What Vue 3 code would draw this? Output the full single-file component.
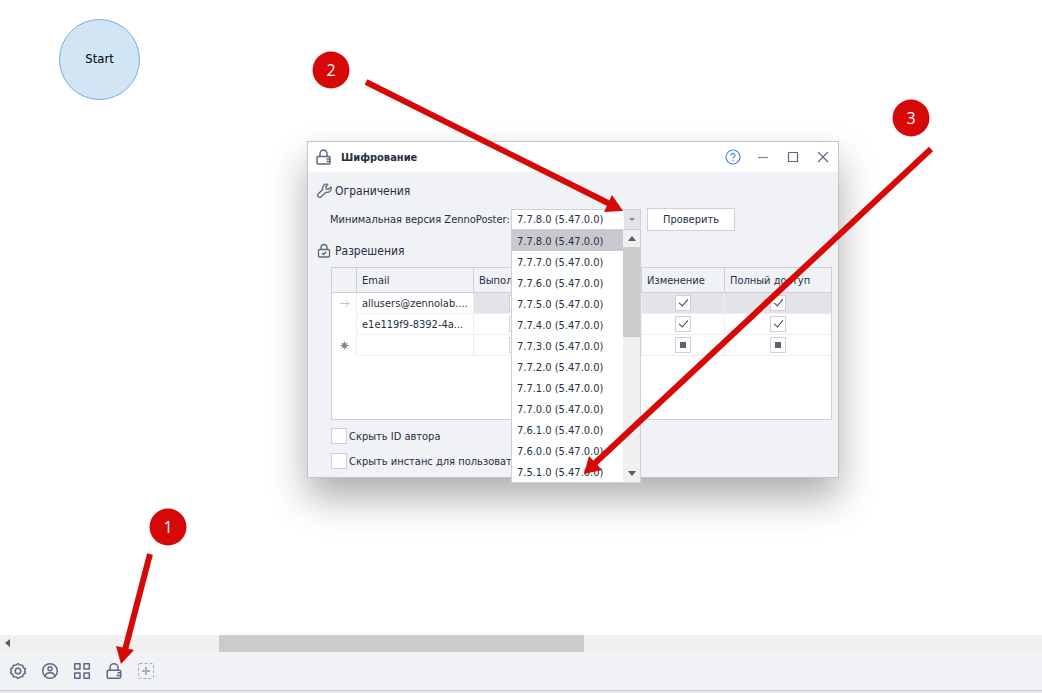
<!-- src/App.vue -->
<script setup>
import { ref } from 'vue'

const versions = [
  '7.7.8.0', '7.7.7.0', '7.7.6.0', '7.7.5.0', '7.7.4.0', '7.7.3.0',
  '7.7.2.0', '7.7.1.0', '7.7.0.0', '7.6.1.0', '7.6.0.0', '7.5.1.0'
].map(v => `${v} (5.47.0.0)`)

const version = ref(versions[0])
const hideAuthor = ref(false)
const hideInstance = ref(false)

const rights = ['run', 'view', 'edit', 'full']

const rows = ref([
  { id: 1, mark: 'current', email: 'allusers@zennolab....', run: true, view: true, edit: true, full: true },
  { id: 2, mark: '', email: 'e1e119f9-8392-4a...', run: true, view: true, edit: true, full: true },
  { id: 3, mark: 'new', email: '', run: null, view: null, edit: null, full: null }
])

// numbered hints with arrows, drawn over the whole workspace
const hints = [
  { n: 1, x: 168, y: 527, line: [150, 554, 125, 650], head: '121,664 116,646 134,650' },
  { n: 2, x: 331, y: 70, line: [366, 82, 610, 204], head: '623,211 612,195 604,212' },
  { n: 3, x: 911, y: 118, line: [931, 149, 594, 464], head: '584,474 589,456 602,470' }
]
</script>

<template>
  <div class="page">
    <main class="canvas">
      <div class="start">Start</div>

      <section class="dialog" aria-label="Шифрование">
        <header class="dialog__head">
          <svg class="dialog__icon" width="16" height="18" viewBox="0 0 16 18">
            <path d="M4 8V5.500a3.500 3.500 0 0 1 7 0V8M2 8.500h11a1 1 0 0 1 1 1v5.500a1 1 0 0 1-1 1H2a1 1 0 0 1-1-1V9.500a1 1 0 0 1 1-1zM14 11h-3.500M14 13.500h-3.500" />
          </svg>
          <h1 class="dialog__title">Шифрование</h1>
          <button class="win help" aria-label="Справка">
            <svg width="16" height="16" viewBox="0 0 16 16">
              <circle cx="8" cy="8" r="7" />
              <path d="M6 6.500a2 2 0 1 1 3 1.600c-.7.400-1 .8-1 1.600M8 11v1.200" />
            </svg>
          </button>
          <button class="win min" aria-label="Свернуть">
            <svg width="12" height="12" viewBox="0 0 12 12"><path d="M1 6.500h10" /></svg>
          </button>
          <button class="win" aria-label="Развернуть">
            <svg width="12" height="12" viewBox="0 0 12 12"><path d="M1.500 1.500h9v9h-9z" /></svg>
          </button>
          <button class="win" aria-label="Закрыть">
            <svg width="12" height="12" viewBox="0 0 12 12"><path d="M1 1l10 10M11 1L1 11" /></svg>
          </button>
        </header>

        <div class="dialog__body">
          <h2 class="group">
            <svg width="16" height="16" viewBox="0 0 16 16">
              <path d="M10.800 1.300a4 4 0 0 0-5 5.200L1.300 10.800a1.900 1.900 0 0 0 .3 3.100 1.900 1.900 0 0 0 2.600-.2l4.800-4.500a4 4 0 0 0 5-5.300L11.300 6.300 9.300 6 8.700 4z" />
            </svg>
            Ограничения
          </h2>

          <div class="field">
            <label for="version">Минимальная версия ZennoPoster:</label>
            <div class="combo">
              <select id="version" v-model="version" class="combo__select">
                <option v-for="v in versions" :key="v">{{ v }}</option>
              </select>
              <span class="combo__arrow"></span>
              <div class="combo__drop">
                <ul class="combo__list" role="listbox">
                  <li v-for="v in versions" :key="v" role="option" :aria-selected="v===version"
                      :class="['item', { active: v===version }]" @click="version=v">
                    {{ v }}
                  </li>
                </ul>
                <div class="vbar">
                  <span class="vbar__up"></span>
                  <span class="vbar__thumb"></span>
                  <span class="vbar__down"></span>
                </div>
              </div>
            </div>
            <button class="check-btn">Проверить</button>
          </div>

          <h2 class="group group--rights">
            <svg width="16" height="16" viewBox="0 0 16 16">
              <path d="M4 6.500V4.500a3 3 0 0 1 6 0v2M2.500 6.500h9a1 1 0 0 1 1 1v5.500a1 1 0 0 1-1 1h-9a1 1 0 0 1-1-1v-5.500a1 1 0 0 1 1-1zM5 10l1.500 1.500L9.300 8.800" />
            </svg>
            Разрешения
          </h2>

          <div class="grid">
            <table>
              <colgroup>
                <col class="c-mark" /><col class="c-email" /><col class="c-run" />
                <col class="c-view" /><col class="c-edit" /><col />
              </colgroup>
              <thead>
                <tr>
                  <th></th><th>Email</th><th>Выполнение</th><th></th><th>Изменение</th><th>Полный доступ</th>
                </tr>
              </thead>
              <tbody>
                <tr v-for="r in rows" :key="r.id" :class="{ current: r.mark==='current' }">
                  <td class="mark">
                    <svg v-if="r.mark==='current'" width="11" height="11" viewBox="0 0 11 11">
                      <path d="M1 5.500h9M6.500 2l3.500 3.500L6.500 9" />
                    </svg>
                    <svg v-else-if="r.mark==='new'" class="new" width="11" height="11" viewBox="0 0 11 11">
                      <circle cx="5.500" cy="5.500" r="2" />
                      <path d="M5.500 1.500v8M1.500 5.500h8M2.700 2.700l5.600 5.600M8.300 2.700L2.700 8.300" />
                    </svg>
                  </td>
                  <td class="email">{{ r.email }}</td>
                  <td v-for="k in rights" :key="k" class="flag">
                    <input v-model="r[k]" type="checkbox" :class="['box', { mixed: r[k]===null }]"
                           :aria-label="k" />
                  </td>
                </tr>
              </tbody>
            </table>
          </div>

          <label class="opt"><input v-model="hideAuthor" type="checkbox" class="box" />Скрыть ID автора</label>
          <label class="opt"><input v-model="hideInstance" type="checkbox" class="box" />Скрыть инстанс для пользователей</label>
        </div>
      </section>
    </main>

    <div class="hbar">
      <span class="hbar__left"></span>
      <span class="hbar__thumb"></span>
    </div>

    <nav class="tools">
      <button class="tool" aria-label="Настройки">
        <svg width="18" height="18" viewBox="0 0 18 18">
          <path d="M9 1.500l2 1.500 2.500.3.900 2.400 2 1.300-.7 2 .7 2-2 1.300-.9 2.400-2.500.3L9 16.500 7 15l-2.500-.3-.9-2.400-2-1.300.7-2-.7-2 2-1.300.9-2.400L7 3z" />
          <circle cx="9" cy="9" r="2.800" />
        </svg>
      </button>
      <button class="tool" aria-label="Профиль">
        <svg width="18" height="18" viewBox="0 0 18 18">
          <circle cx="9" cy="9" r="7.300" />
          <circle cx="9" cy="6.800" r="2" />
          <path d="M4 14.200c.6-2.600 2.300-3.400 5-3.400s4.400.8 5 3.400" />
        </svg>
      </button>
      <button class="tool" aria-label="Блоки">
        <svg width="18" height="18" viewBox="0 0 18 18">
          <path d="M1.700 1.700h5.300v5.300h-5.300zM11 1.700h5.300v5.300h-5.300zM1.700 11h5.300v5.300h-5.300zM11 11h5.300v5.300h-5.300z" />
        </svg>
      </button>
      <button class="tool" aria-label="Шифрование">
        <svg width="18" height="18" viewBox="0 0 18 18">
          <path d="M5 8V5.700a4 4 0 0 1 8 0V8M3.700 8.200h10.500a1.500 1.500 0 0 1 1.500 1.500v5a1.500 1.500 0 0 1-1.500 1.500H3.700a1.500 1.500 0 0 1-1.500-1.500v-5a1.500 1.500 0 0 1 1.500-1.500zM15.500 10.800h-3M15.500 13.500h-4" />
        </svg>
      </button>
      <button class="tool tool--add" aria-label="Добавить">
        <svg width="18" height="18" viewBox="0 0 18 18">
          <rect x="1.500" y="1.500" width="15" height="15" rx="1" stroke-dasharray="3 2" />
          <path class="plus" d="M9 5v8M5 9h8" />
        </svg>
      </button>
    </nav>
    <footer class="status"></footer>

    <svg class="hints">
      <g v-for="h in hints" :key="h.n">
        <line :x1="h.line[0]" :y1="h.line[1]" :x2="h.line[2]" :y2="h.line[3]" />
        <polygon :points="h.head" />
        <circle :cx="h.x" :cy="h.y" r="18.500" />
        <text :x="h.x" :y="h.y + 6">{{ h.n }}</text>
      </g>
    </svg>
  </div>
</template>

<style>
body { margin:0; background:#fff; }
</style>

<style scoped>
* { box-sizing:border-box; }
.page {
  position:relative; display:flex; flex-direction:column; min-height:100vh; overflow:hidden;
  font-family:"DejaVu Sans Condensed", "DejaVu Sans", sans-serif; font-size:11px; color:#26303e;
}
.page svg { fill:none; stroke:#5d6881; stroke-width:1.5; stroke-linejoin:round; flex:none; }
button { font:inherit; color:inherit; cursor:pointer; }

.canvas { position:relative; flex:1; }
.start {
  position:absolute; left:59px; top:19px; width:81px; height:81px; border-radius:50%;
  display:flex; align-items:center; justify-content:center; padding-bottom:2px;
  background:#d2e5f4; border:1px solid #78abe0; color:#000; font-size:13px;
}

/* dialog window */
.dialog {
  position:absolute; left:307px; top:141px; width:532px;
  background:#f1f2f6; border:1px solid #c3c5ca;
  box-shadow:0 20px 36px rgba(0,0,0,.32);
}
.dialog__head { display:flex; align-items:center; height:30px; padding-left:8px; background:#fff; }
.dialog__title { flex:1; margin:0 0 0 9px; font-size:11px; font-weight:700; }
.win {
  display:flex; align-items:center; justify-content:center;
  width:30px; height:30px; padding:0; border:0; background:none;
}
.page .win svg { stroke-width:1.2; }
.page .help svg { stroke:#4a80ec; }
.page .min svg { stroke:#7b8599; }

.dialog__body { padding:10px 6px 8px 9px; }
.group { display:flex; align-items:center; gap:2px; height:18px; margin:0; font-size:12px; font-weight:400; }
.page .group svg { stroke-width:1.3; }
.group--rights { margin-top:9px; }

.field { display:flex; align-items:flex-start; height:24px; margin-top:9px; padding-left:13px; }
.field label { width:181px; line-height:22px; white-space:nowrap; }
.combo { position:relative; display:flex; width:130px; height:21px; border:1px solid #ced1da; background:#fff; }
.combo__select {
  flex:1; min-width:0; padding:0 0 0 5px; border:0; background:none;
  appearance:none; font:inherit; color:inherit; outline:none;
}
.combo__arrow { display:flex; align-items:center; justify-content:center; width:16px; background:#e3e4e8; }
.combo__arrow::after { content:''; border:3px solid transparent; border-top-color:#7d838e; border-bottom:0; }
.combo__drop {
  position:absolute; z-index:2; left:-1px; right:-1px; top:20px;
  display:flex; background:#fff; border:1px solid #ced1da; border-top:0;
}
.combo__list { flex:1; margin:0; padding:0; list-style:none; }
.item { height:21px; padding-left:5px; line-height:23px; cursor:pointer; }
.item.active { background:#c8c9cd; }
.vbar { display:flex; flex-direction:column; width:17px; background:#f0f0f0; }
.vbar__up, .vbar__down { display:flex; align-items:center; justify-content:center; height:17px; }
.vbar__up::after { content:''; border:4px solid transparent; border-bottom:5px solid #565c66; border-top:0; }
.vbar__down::after { content:''; border:4px solid transparent; border-top:5px solid #565c66; border-bottom:0; }
.vbar__thumb { height:90px; background:#cbcbcb; }
.vbar__down { margin-top:auto; }
.check-btn { width:88px; height:23px; margin-left:6px; margin-top:-1px; padding:0; border:1px solid #ced1da; background:#fff; }

/* permissions */
.grid { height:153px; margin:7px 0 8px 14px; border:1px solid #ced1da; background:#fff; }
table { width:100%; border-collapse:separate; border-spacing:0; table-layout:fixed; }
.c-mark { width:25px; }
.c-email { width:117px; }
.c-run { width:87px; }
.c-view { width:81px; }
.c-edit { width:83px; }
th {
  height:25px; padding:0 0 0 5px; text-align:left; font-weight:400; white-space:nowrap; overflow:hidden;
  background:#f1f2f6; border-right:1px solid #ced1da; border-bottom:1px solid #ced1da;
}
td { height:21px; padding:0; border-right:1px solid #eceef2; border-bottom:1px solid #eceef2; }
th:last-child, td:last-child { border-right:0; }
.mark { border-bottom-color:transparent; text-align:center; }
.mark svg { display:block; margin:0 auto; }
.page .mark svg { stroke:#c3c6cc; stroke-width:1; }
.page .mark .new { stroke:#83878f; fill:#83878f; }
.email { padding:0 5px; white-space:nowrap; }
.current .flag { background:#e3e4e8; }
.flag { text-align:center; }
.box {
  appearance:none; display:inline-block; width:16px; height:16px; margin:0;
  vertical-align:middle; border:1px solid #ced1da; background:#fff; flex:none;
}
.flag .box { display:block; margin:0 auto; }
.box:checked::after {
  content:''; display:block; width:4px; height:8px; margin:1px 0 0 5px;
  border:solid #3c4350; border-width:0 1px 1px 0; transform:rotate(40deg);
}
.box.mixed::after { content:''; display:block; width:6px; height:6px; margin:4px; background:#5b626c; }
.opt { display:flex; align-items:center; gap:2px; width:240px; height:16px; margin:0 0 9px 14px; white-space:nowrap; }
.opt:last-child { margin-bottom:0; }

/* bottom bars */
.hbar { display:flex; position:relative; height:17px; background:#f0f0f0; }
.hbar__left { position:absolute; left:5px; top:4px; border:4px solid transparent; border-right:5px solid #565c66; border-left:0; }
.hbar__thumb { width:35%; margin-left:21%; background:#cbcbcb; }
.tools { display:flex; align-items:center; gap:14px; height:38px; padding-left:9px; background:#f1f2f6; }
.tool { display:flex; padding:0; border:0; background:none; }
.page .tool--add svg { stroke:#a3aec6; stroke-width:1; }
.page .tool--add .plus { stroke-width:2; }
.status { height:3px; border-top:1px solid #ced1da; background:#e6e7eb; }

.page .hints { position:absolute; left:0; top:0; width:100%; height:100%; pointer-events:none; stroke:none; fill:#d60808; z-index:3; }
.hints line { stroke:#d60808; stroke-width:6; }
.hints text { fill:#fff; font:16px "Open Sans", "Noto Sans", sans-serif; text-anchor:middle; }
</style>
